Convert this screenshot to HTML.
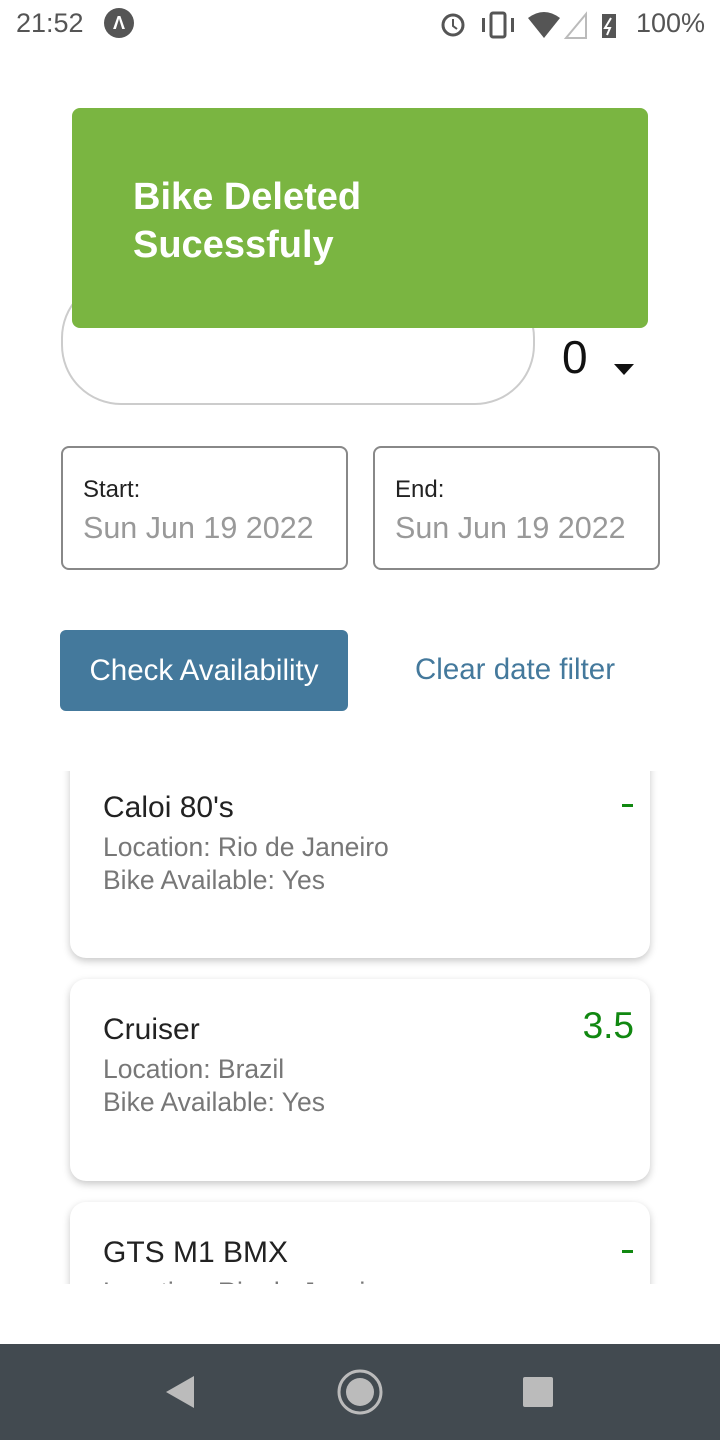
<!DOCTYPE html>
<html><head><style>
*{margin:0;padding:0;box-sizing:border-box}
body{width:720px;height:1440px;background:#fff;font-family:"Liberation Sans",sans-serif;position:relative;overflow:hidden}
.a{position:absolute}
.card{position:absolute;left:70px;width:580px;background:#fff;border-radius:16px;box-shadow:0 3px 8px rgba(0,0,0,.22)}
.card .t{position:absolute;left:33px;font-size:30px;color:#222}
.card .l{position:absolute;left:33px;font-size:26.5px;color:#777;line-height:33px}
.card .p{position:absolute;right:16px;color:#118811;font-size:37px}
.card .d{position:absolute;right:17px;width:11px;height:3px;background:#118811}
.date{position:absolute;top:446px;width:287px;height:124px;border:2px solid #888;border-radius:8px}
.date .h{position:absolute;left:20px;top:28px;font-size:24px;color:#222}
.date .v{position:absolute;left:20px;top:63px;font-size:30.5px;color:#999}
</style></head><body>
<div class="a" style="left:16px;top:8px;font-size:27px;color:#555">21:52</div>
<div class="a" style="left:104px;top:8px;width:30px;height:30px;border-radius:50%;background:#555;color:#fff;font-size:18px;text-align:center;line-height:30px;font-weight:bold">Λ</div>
<svg class="a" style="left:438px;top:8px" width="200" height="32">
<circle cx="15" cy="17" r="10" fill="none" stroke="#555" stroke-width="3"/><path d="M15 11v7l4 3" stroke="#555" stroke-width="2" fill="none"/>
<rect x="53" y="5" width="14" height="24" rx="2" fill="none" stroke="#555" stroke-width="3"/><rect x="44" y="10" width="3" height="14" fill="#555"/><rect x="73" y="10" width="3" height="14" fill="#555"/>
<path d="M90 10 Q106 -2 122 10 L106 30Z" fill="#555"/>
<path d="M148 6 L148 30 L128 30Z" fill="none" stroke="#bbb" stroke-width="2"/>
<rect x="164" y="6" width="14" height="24" fill="#555"/><path d="M173 10 L167 20 L172 20 L169 27" stroke="#fff" stroke-width="2" fill="none"/>
</svg>
<div class="a" style="left:636px;top:8px;font-size:27px;color:#555">100%</div>

<div class="a" style="left:61px;top:278px;width:474px;height:127px;border:2px solid #ccc;border-radius:60px"></div>
<div class="a" style="left:562px;top:330px;font-size:46px;color:#111">0</div>
<div class="a" style="left:614px;top:364px;width:0;height:0;border-left:10px solid transparent;border-right:10px solid transparent;border-top:11px solid #111"></div>
<div class="a" style="left:72px;top:108px;width:576px;height:220px;background:#7ab541;border-radius:8px"></div>
<div class="a" style="left:133px;top:173px;font-size:38px;font-weight:bold;color:#fff;line-height:48px">Bike Deleted<br>Sucessfuly</div>

<div class="date" style="left:61px"><div class="h">Start:</div><div class="v">Sun Jun 19 2022</div></div>
<div class="date" style="left:373px"><div class="h">End:</div><div class="v">Sun Jun 19 2022</div></div>

<div class="a" style="left:60px;top:630px;width:288px;height:81px;background:#44799c;border-radius:6px;color:#fff;font-size:29.5px;text-align:center;line-height:81px">Check Availability</div>
<div class="a" style="left:415px;top:653px;font-size:29.5px;color:#44799c">Clear date filter</div>

<div class="a" style="left:0;top:771px;width:720px;height:513px;overflow:hidden">
<div class="card" style="top:-40px;height:227px"><div class="t" style="top:60px">Caloi 80's</div><div class="l" style="top:100px">Location: Rio de Janeiro<br>Bike Available: Yes</div><div class="d" style="top:73px"></div></div>
<div class="card" style="top:208px;height:202px"><div class="t" style="top:34px">Cruiser</div><div class="l" style="top:74px">Location: Brazil<br>Bike Available: Yes</div><div class="p" style="top:26px">3.5</div></div>
<div class="card" style="top:431px;height:202px"><div class="t" style="top:34px">GTS M1 BMX</div><div class="l" style="top:74px">Location: Rio de Janeiro</div><div class="d" style="top:48px"></div></div>
</div>

<div class="a" style="left:0;top:1344px;width:720px;height:96px;background:#424a50"></div>
<svg class="a" style="left:0;top:1344px" width="720" height="96">
<path d="M194 32 L194 64 L166 48Z" fill="#bbb"/>
<circle cx="360" cy="48" r="21" fill="none" stroke="#bbb" stroke-width="3"/><circle cx="360" cy="48" r="14" fill="#bbb"/>
<rect x="523" y="33" width="30" height="30" rx="2" fill="#bbb"/>
</svg>
</body></html>
